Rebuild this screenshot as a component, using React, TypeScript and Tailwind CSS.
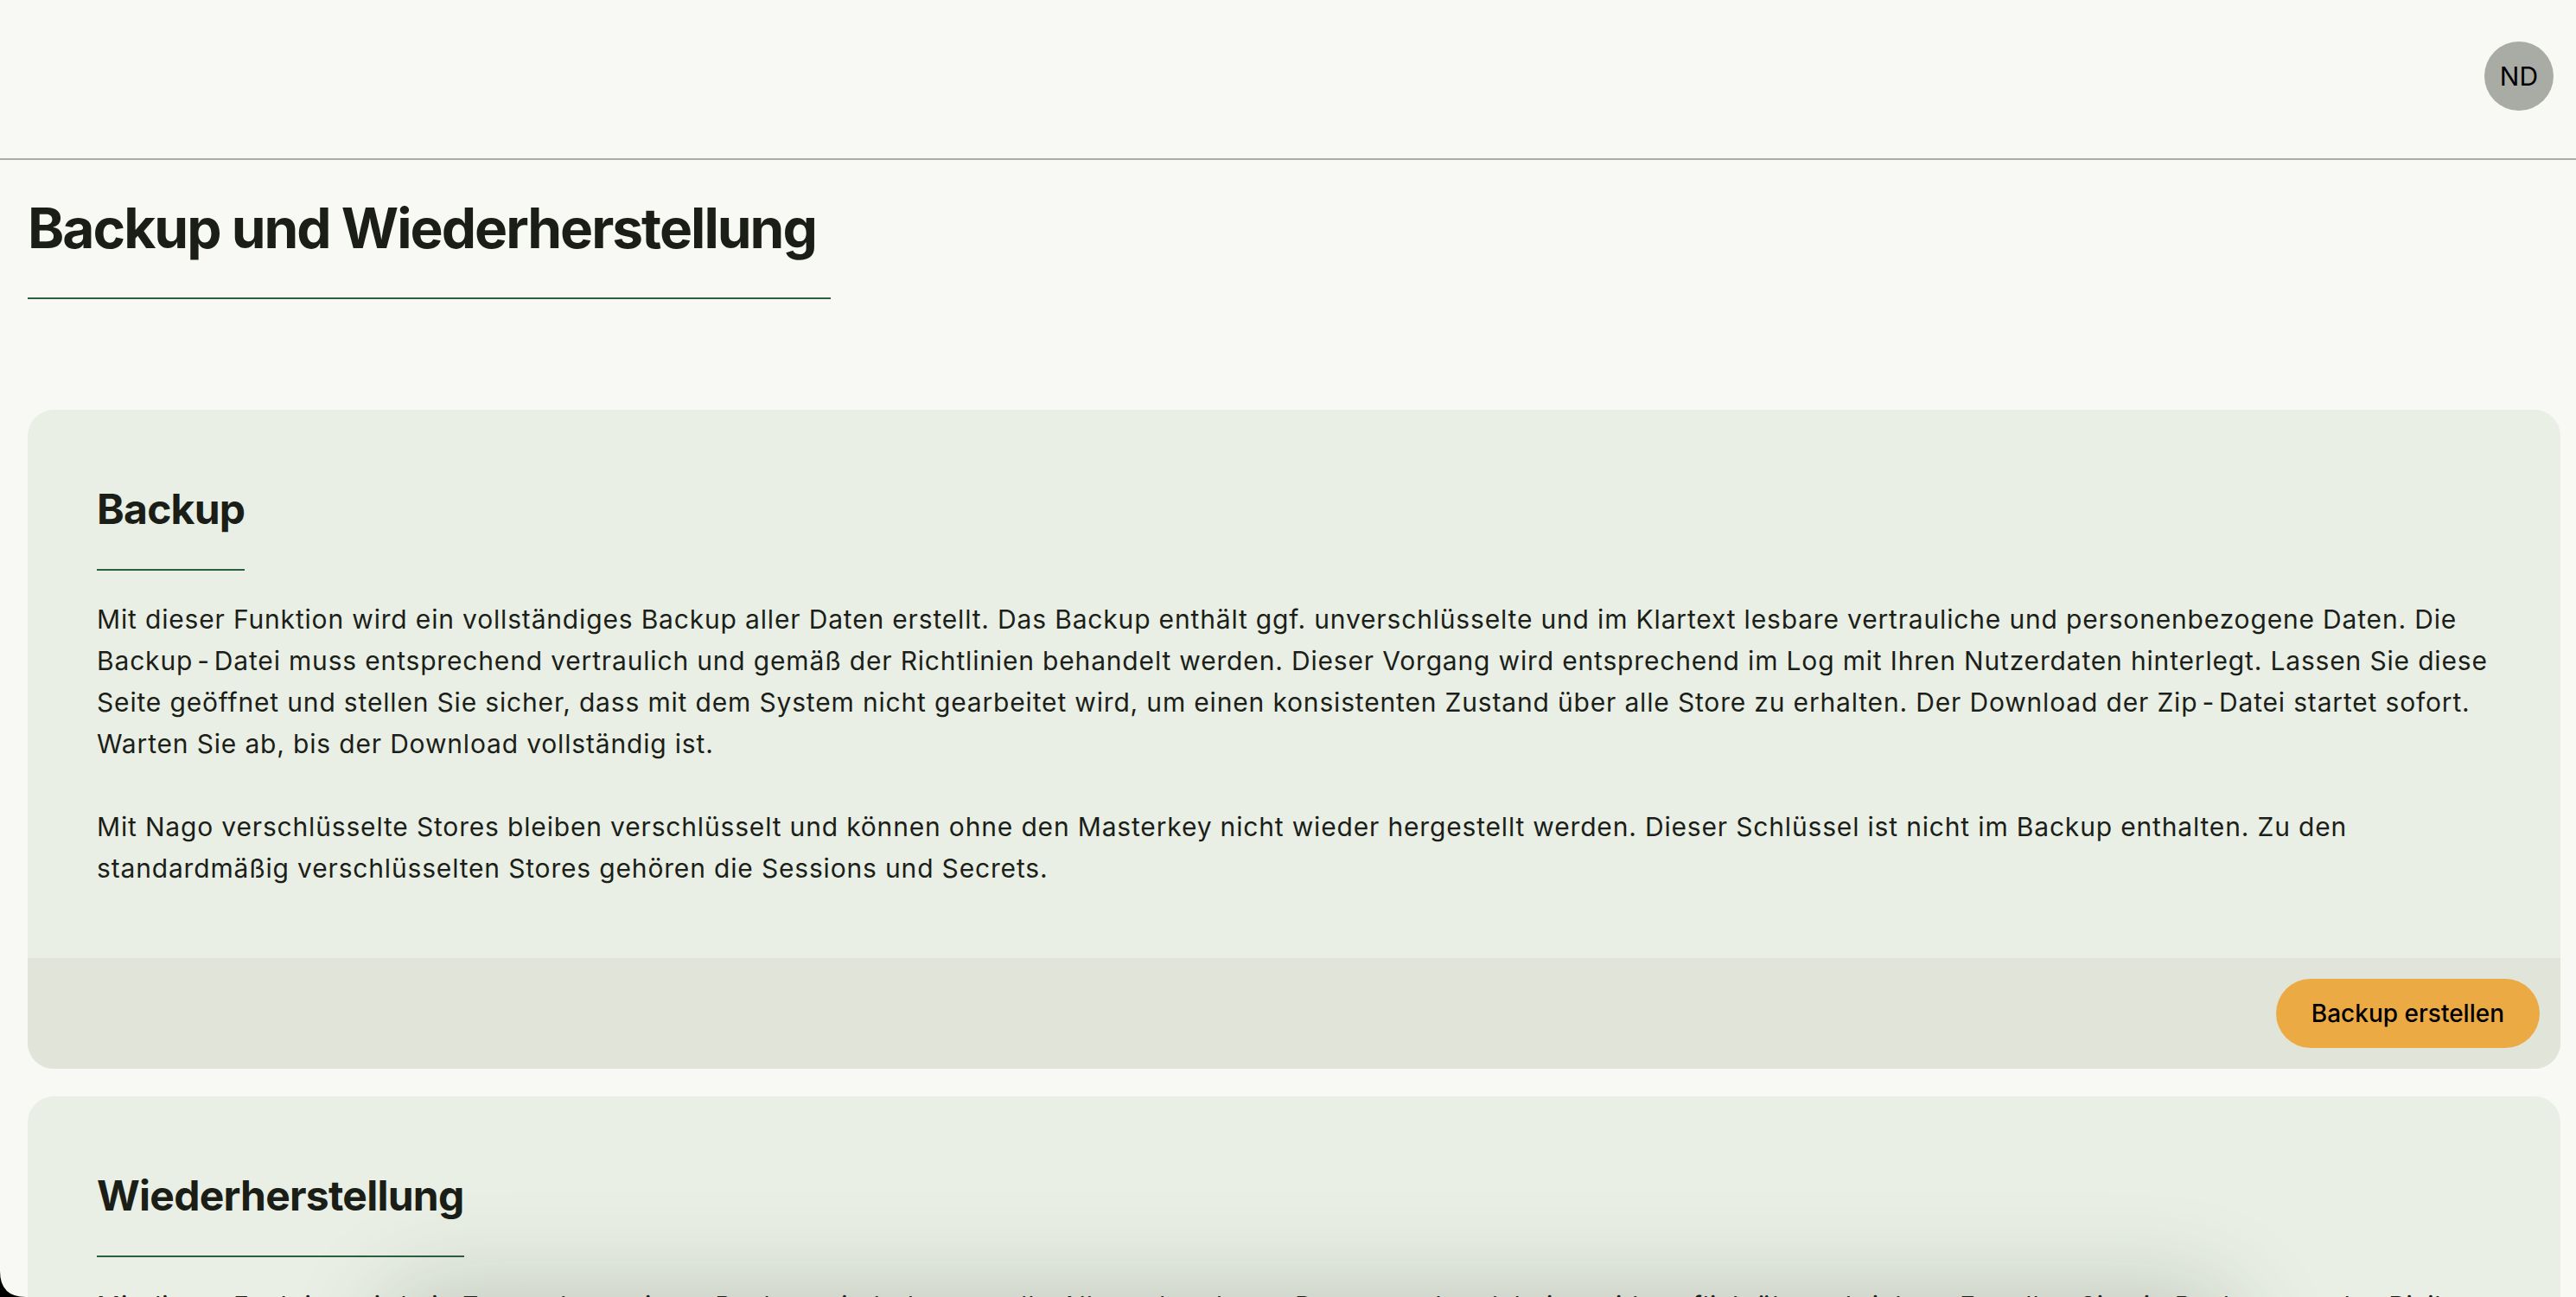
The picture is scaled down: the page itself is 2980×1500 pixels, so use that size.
import React from 'react';

const body = "font-['Inter',_'Noto_Sans',_sans-serif]";

type SectionProps = {
  title: string;
  paragraphs: string[][];
  action?: string;
};

// compound-word hyphen gets a little air on both sides
function withDashes(text: string) {
  const parts = text.split('-');
  return parts.map((part, i) => (
    <React.Fragment key={i}>
      {part}
      {i < parts.length - 1 && <span className="mx-[5px]">-</span>}
    </React.Fragment>
  ));
}

function Section({ title, paragraphs, action }: SectionProps) {
  return (
    <section className="rounded-[30px] bg-[#e9efe4] overflow-hidden">
      <div className="px-[80px] pt-[91px] pb-[80px]">
        <h2 className="inline-block text-[48px] leading-none font-bold tracking-[-0.75px] text-[#1a1e17] pb-[45px] border-b-2 border-[#2b6041]">
          {title}
        </h2>
        <div className="mt-[32px] -mr-[16px] text-[30px] leading-[48px] tracking-[0.83px] text-[#1b1e19]">
          {paragraphs.map((lines, i) => (
            <p key={i} className={i > 0 ? 'mt-[48px]' : ''}>
              {lines.map((line, j) => (
                <React.Fragment key={j}>
                  {withDashes(line)}
                  {j < lines.length - 1 && <br />}
                </React.Fragment>
              ))}
            </p>
          ))}
        </div>
      </div>
      {action && (
        <div className="flex justify-end bg-[#e0e4d9] p-[24px]">
          <button className="h-[80px] px-[41px] rounded-full bg-[#ecaa44] text-[28px] font-medium text-black">
            {action}
          </button>
        </div>
      )}
    </section>
  );
}

export default function App() {
  return (
    <div className={`relative h-[1500px] overflow-hidden bg-[#f8f9f4] ${body}`}>
      {/* top bar */}
      <header className="h-[185px] flex items-start justify-end border-b-2 border-[#a9ada6]">
        <div className="mt-[48px] mr-[26px] w-[80px] h-[80px] rounded-full bg-[#a8aca5] flex items-center justify-center text-[30px] text-black">
          ND
        </div>
      </header>

      <main className="pl-[32px] pr-[18px]">
        <h1 className="inline-block mt-[47px] pb-[48px] pr-[17px] text-[64px] leading-none font-bold tracking-[-2px] text-[#1a1e17] border-b-2 border-[#2b6041]">
          Backup und Wiederherstellung
        </h1>

        <div className="mt-[128px] flex flex-col gap-[32px]">
          <Section
            title="Backup"
            paragraphs={[
              [
                'Mit dieser Funktion wird ein vollständiges Backup aller Daten erstellt. Das Backup enthält ggf. unverschlüsselte und im Klartext lesbare vertrauliche und personenbezogene Daten. Die',
                'Backup-Datei muss entsprechend vertraulich und gemäß der Richtlinien behandelt werden. Dieser Vorgang wird entsprechend im Log mit Ihren Nutzerdaten hinterlegt. Lassen Sie diese',
                'Seite geöffnet und stellen Sie sicher, dass mit dem System nicht gearbeitet wird, um einen konsistenten Zustand über alle Store zu erhalten. Der Download der Zip-Datei startet sofort.',
                'Warten Sie ab, bis der Download vollständig ist.',
              ],
              [
                'Mit Nago verschlüsselte Stores bleiben verschlüsselt und können ohne den Masterkey nicht wieder hergestellt werden. Dieser Schlüssel ist nicht im Backup enthalten. Zu den',
                'standardmäßig verschlüsselten Stores gehören die Sessions und Secrets.',
              ],
            ]}
            action="Backup erstellen"
          />
          <Section
            title="Wiederherstellung"
            paragraphs={[
              [
                'Mit dieser Funktion wird ein Zustand aus einem Backup wiederhergestellt. Alle vorhandenen Daten werden dabei unwiderruflich überschrieben. Erstellen Sie ein Backup, um das Risiko',
                'eines Datenverlusts zu minimieren.',
              ],
            ]}
            action="Backup einspielen"
          />
        </div>
      </main>

      {/* shadow of an element just below the viewport */}
      <div className="absolute left-[480px] right-[430px] top-[1530px] h-[120px] rounded-[30px] shadow-[0_0_110px_40px_rgba(60,65,55,0.22)]" />

      {/* screen corner */}
      <svg className="absolute left-0 bottom-0" width="30" height="30" viewBox="0 0 30 30">
        <path d="M0 0 Q0 30 30 30 L0 30 Z" fill="#000" />
      </svg>
    </div>
  );
}
